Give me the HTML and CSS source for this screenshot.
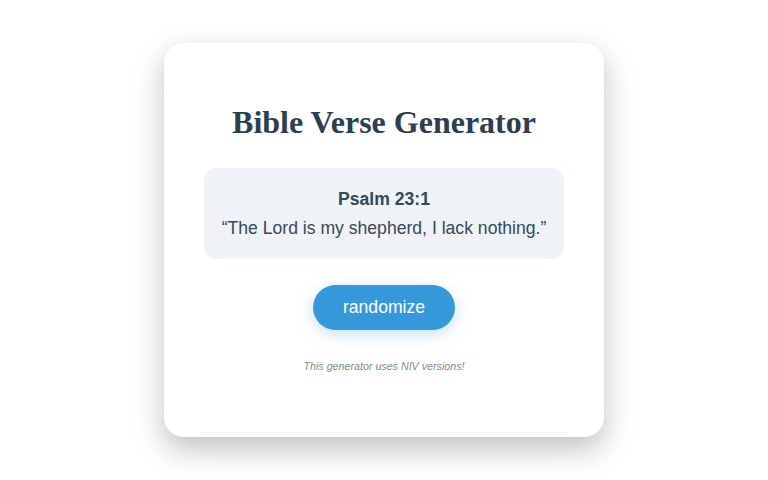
FILE: index.html
```html
<!DOCTYPE html>
<html lang="en">
<head>
  <meta charset="UTF-8" />
  <title>Bible Verse Generator</title>
  <link rel="stylesheet" href="styles.css">
</head>
<body>

<div class="card">
  <h1>Bible Verse Generator</h1>

  <div class="verse-box">
    <p class="ref" id="verseRef">Psalm 23:1</p>
    <p class="text" id="verseText">“The Lord is my shepherd, I lack nothing.”</p>
  </div>

  <button onclick="randomize()">randomize</button>

  <p class="note">This generator uses NIV versions!</p>
</div>

<script>
  const verses = [
    { ref: 'Psalm 23:1', text: 'The Lord is my shepherd, I lack nothing.' },
    { ref: 'John 3:16', text: 'For God so loved the world that he gave his one and only Son.' },
    { ref: 'Philippians 4:13', text: 'I can do all this through him who gives me strength.' },
    { ref: 'Proverbs 3:5', text: 'Trust in the Lord with all your heart.' }
  ];

  function randomize() {
    const v = verses[Math.floor(Math.random() * verses.length)];
    document.getElementById('verseRef').textContent = v.ref;
    document.getElementById('verseText').textContent = '“' + v.text + '”';
  }
</script>

</body>
</html>
```

FILE: styles.css
```css
html, body {
  margin: 0;
  height: 100%;
}
body {
  font-family: "Liberation Sans", Arial, sans-serif;
  background: #fff;
  display: flex;
  align-items: center;
  justify-content: center;
}
.card {
  width: 360px;
  padding: 40px;
  background: white;
  border-radius: 20px;
  box-shadow: 0 12px 30px rgba(0, 0, 0, 0.25);
  text-align: center;
}
h1 {
  font-family: "Liberation Serif", "Times New Roman", serif;
  font-size: 32px;
  color: #2c3e50;
  margin: 21px 0 27px;
}
.verse-box {
  background: #f0f3f5;
  border-radius: 12px;
  padding: 17px 10px;
  color: #34495e;
  font-size: 1.1rem;
  line-height: 1.6;
}
.verse-box p {
  margin: 0;
}
.ref {
  font-weight: bold;
}
button {
  margin-top: 26px;
  padding: 12px 30px;
  font-family: inherit;
  font-size: 1.1rem;
  line-height: 21px;
  background: #3498db;
  color: white;
  border: none;
  border-radius: 25px;
  cursor: pointer;
  box-shadow: 0 4px 15px rgba(52, 152, 219, 0.3);
}
button:hover {
  background: #2980b9;
}
.note {
  margin: 30px 0 25px;
  font-size: 10.7px;
  font-style: italic;
  color: #7f8c8d;
}
```
